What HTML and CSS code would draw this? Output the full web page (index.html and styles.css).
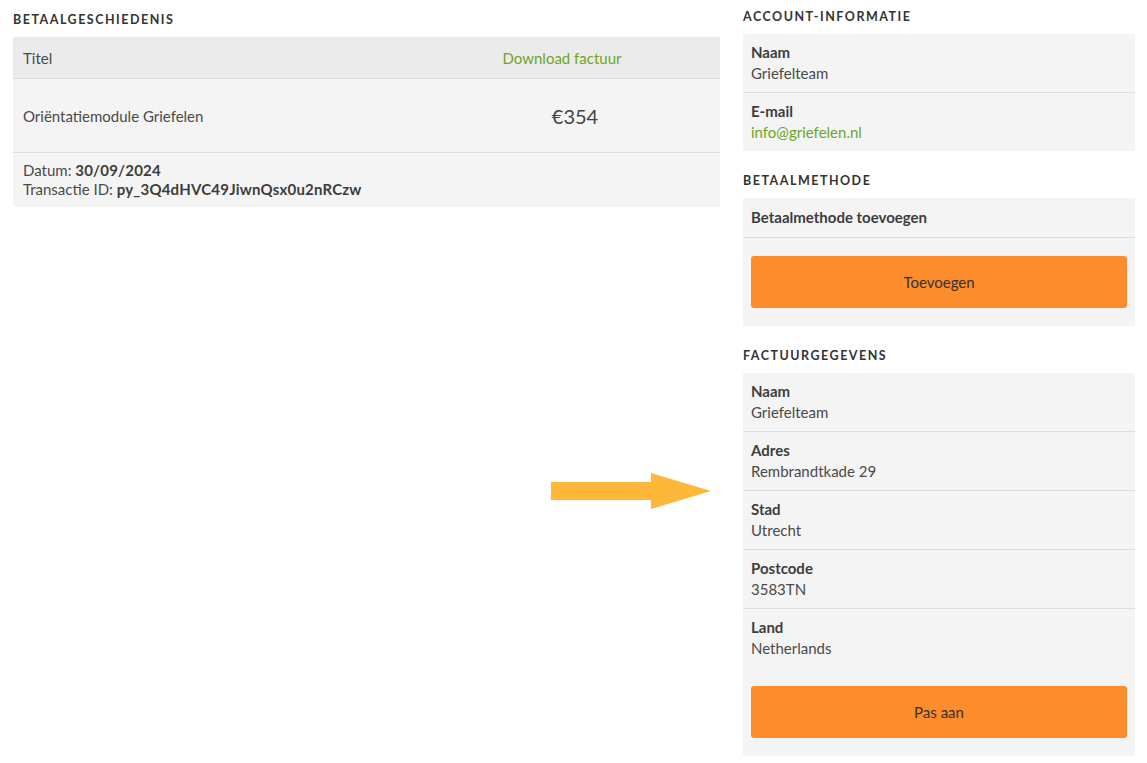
FILE: index.html
```html
<!DOCTYPE html>
<html lang="nl">
<head>
<meta charset="utf-8">
<title>Account</title>
<link rel="stylesheet" href="styles.css">
</head>
<body>
<div class="page">
  <section class="left">
    <h2 class="heading heading-left">Betaalgeschiedenis</h2>
    <div class="table">
      <div class="row head">
        <div class="cell title">Titel</div>
        <div class="cell action"><a class="link" href="#">Download factuur</a></div>
      </div>
      <div class="row item">
        <div class="cell title">Oriëntatiemodule Griefelen</div>
        <div class="cell action price">€354</div>
      </div>
      <div class="details">
        <div>Datum: <b>30/09/2024</b></div>
        <div>Transactie ID: <b>py_3Q4dHVC49JiwnQsx0u2nRCzw</b></div>
      </div>
    </div>
    <div class="arrow-area">
      <svg class="arrow" width="161" height="37" viewBox="0 0 161 37">
        <polygon points="0,9 100,9 100,0 160,18 100,36 100,27 0,27" fill="#fdb83a"/>
      </svg>
    </div>
  </section>
  <aside class="right">
    <h2 class="heading">Account-informatie</h2>
    <div class="card">
      <div class="field"><div class="label">Naam</div><div class="value">Griefelteam</div></div>
      <div class="field last"><div class="label">E-mail</div><div class="value"><a class="link" href="#">info@griefelen.nl</a></div></div>
    </div>

    <h2 class="heading">Betaalmethode</h2>
    <div class="card">
      <div class="field single"><div class="label">Betaalmethode toevoegen</div></div>
      <div class="actions"><button class="btn">Toevoegen</button></div>
    </div>

    <h2 class="heading">Factuurgegevens</h2>
    <div class="card">
      <div class="field"><div class="label">Naam</div><div class="value">Griefelteam</div></div>
      <div class="field"><div class="label">Adres</div><div class="value">Rembrandtkade 29</div></div>
      <div class="field"><div class="label">Stad</div><div class="value">Utrecht</div></div>
      <div class="field"><div class="label">Postcode</div><div class="value">3583TN</div></div>
      <div class="field last"><div class="label">Land</div><div class="value">Netherlands</div></div>
      <div class="actions tight"><button class="btn">Pas aan</button></div>
    </div>
  </aside>
</div>
</body>
</html>
```

FILE: styles.css
```css
* { box-sizing: border-box; }
html, body { margin: 0; padding: 0; background: #fff; }
body {
  font-family: Lato, "Open Sans", Arial, sans-serif;
  font-size: 15px;
  color: #4a4a4a;
}
.page {
  display: flex;
  gap: 23px;
  padding: 0 12px 0 13px;
}
.left { width: 707px; display: flex; flex-direction: column; }
.right { width: 392px; }

.heading {
  margin: 0;
  font-size: 12.5px;
  font-weight: 700;
  letter-spacing: 1.5px;
  text-transform: uppercase;
  color: #333;
  line-height: 16px;
  padding: 22px 0 9px;
}
.right .heading:first-child { padding-top: 9px; }
.heading-left { padding-top: 12px; }

.link { color: #6ea51e; text-decoration: none; }

.table { background: #f4f4f4; }
.row { display: flex; align-items: center; border-bottom: 1px solid #dcdcdc; }
.row.head { background: #ebebeb; height: 42px; }
.row.item { height: 74px; }
.cell.title { flex: 1; padding-left: 10px; }
.cell.action { width: 316px; text-align: center; }
.price { font-size: 20px; padding-left: 26px; color: #444; }
.details { padding: 8px 10px 8px 10px; line-height: 19px; }
.details b { font-weight: 700; color: #3d3d3d; letter-spacing: 0.2px; }

.arrow-area { padding-top: 266px; padding-left: 538px; }
.arrow { display: block; }

.card { background: #f4f4f4; }
.field {
  padding: 8px 8px;
  border-bottom: 1px solid #dcdcdc;
  line-height: 21px;
}
.field.single { padding: 9px 8px; }
.field.last { border-bottom: none; }
.label { font-weight: 700; color: #3d3d3d; }
.value { color: #4a4a4a; }
.actions { padding: 18px 8px; }
.actions.tight { padding-top: 19px; }
.btn {
  display: block;
  width: 100%;
  height: 52px;
  border: none;
  border-radius: 3px;
  background: #fd8c2d;
  color: #333;
  font-family: inherit;
  font-size: 15px;
  cursor: pointer;
}
```
